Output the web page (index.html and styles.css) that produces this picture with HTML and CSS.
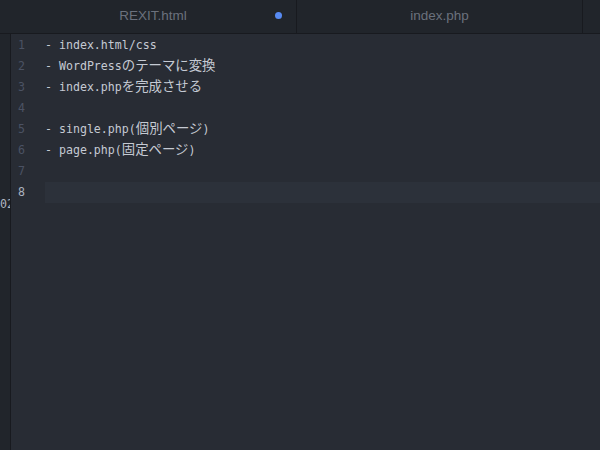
FILE: index.html
```html
<!DOCTYPE html>
<html lang="ja">
<head>
<meta charset="utf-8">
<title>Editor</title>
<link rel="stylesheet" href="styles.css">
</head>
<body>
<div class="tabs">
  <div class="tab tab-first"><span class="tab-title">REXIT.html</span><span class="dot"></span></div>
  <div class="tab"><span class="tab-title">index.php</span></div>
  <div class="tab-rest"></div>
</div>
<div class="main">
  <div class="side"><span class="side-num">02</span></div>
  <div class="editor">
    <div class="line"><span class="num">1</span><span class="code">- index.html/css</span></div>
    <div class="line"><span class="num">2</span><span class="code">- WordPress<span class="ja">のテーマに変換</span></span></div>
    <div class="line"><span class="num">3</span><span class="code">- index.php<span class="ja">を完成させる</span></span></div>
    <div class="line"><span class="num">4</span><span class="code"></span></div>
    <div class="line"><span class="num">5</span><span class="code">- single.php(<span class="ja">個別ページ</span>)</span></div>
    <div class="line"><span class="num">6</span><span class="code">- page.php(<span class="ja">固定ページ</span>)</span></div>
    <div class="line"><span class="num">7</span><span class="code"></span></div>
    <div class="line current"><span class="num">8</span><span class="code"></span></div>
  </div>
</div>
</body>
</html>
```
FILE: styles.css
```css
html, body {
  margin: 0;
  padding: 0;
  height: 100%;
  background: #21252b;
  overflow: hidden;
}
.tabs {
  display: flex;
  height: 33px;
  border-bottom: 1px solid #181a1f;
  background: #21252b;
}
.tab {
  position: relative;
  width: 285px;
  flex: none;
  display: flex;
  align-items: center;
  justify-content: center;
  border-right: 1px solid #181a1f;
  font-family: "Liberation Sans", Arial, sans-serif;
  font-size: 13.5px;
  color: #6b717d;
}
.tab-first {
  width: 286px;
  padding-left: 10px;
}
.tab-title {
  position: relative;
  top: -1px;
}
.dot {
  position: absolute;
  left: 275px;
  top: 12px;
  width: 7px;
  height: 7px;
  border-radius: 50%;
  background: #578af2;
}
.tab-rest {
  flex: 1;
}
.main {
  display: flex;
  height: 416px;
}
.side {
  width: 10px;
  flex: none;
  background: #21252b;
  border-right: 1px solid #181a1f;
  overflow: hidden;
  position: relative;
  font-family: "DejaVu Sans Mono", monospace;
  font-size: 11.6px;
  color: #b0b6c0;
}
.side-num {
  position: absolute;
  left: 0;
  top: 163px;
  line-height: 14px;
}
.editor {
  flex: 1;
  background: #282c34;
  padding-top: 1px;
  font-family: "DejaVu Sans Mono", "Noto Sans CJK JP", monospace;
  font-size: 11.6px;
  color: #c5cad3;
}
.line {
  display: flex;
  height: 21px;
  line-height: 21px;
}
.num {
  width: 14px;
  padding-right: 20px;
  text-align: right;
  flex: none;
  color: #4b5263;
}
.code {
  flex: 1;
  white-space: pre;
}
.ja {
  font-family: "Noto Sans CJK JP", sans-serif;
  font-size: 13.4px;
  line-height: 1;
}
.current .num {
  color: #abb2bf;
}
.current .code {
  background: #2c313a;
}
```
